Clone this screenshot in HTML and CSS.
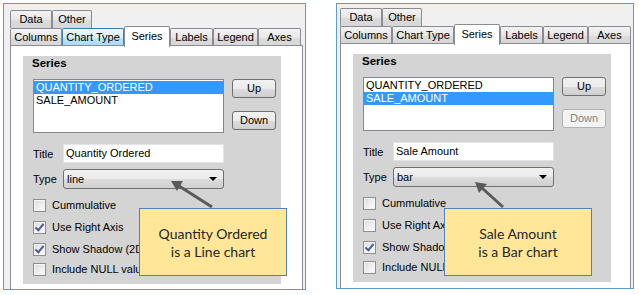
FILE: index.html
```html
<!DOCTYPE html>
<html>
<head>
<meta charset="utf-8">
<link rel="stylesheet" href="styles.css">
</head>
<body>
<div class="stage">
  <section class="panel panel-left">
    <div class="tabrow back">
      <span class="tab t-data">Data</span><span class="tab t-other">Other</span>
    </div>
    <div class="tabrow front">
      <span class="tab t-columns">Columns</span><span class="tab t-chart hover">Chart Type</span><span class="tab t-series active">Series</span><span class="tab t-labels">Labels</span><span class="tab t-legend">Legend</span><span class="tab t-axes">Axes</span>
    </div>
    <div class="pane">
      <div class="group">
        <div class="group-title">Series</div>
        <div class="list-row">
          <ul class="listbox">
            <li class="sel">QUANTITY_ORDERED</li>
            <li>SALE_AMOUNT</li>
          </ul>
          <div class="btns">
            <span class="btn btn-up">Up</span>
            <span class="btn btn-down">Down</span>
          </div>
        </div>
        <div class="field"><span class="flabel">Title</span><span class="input">Quantity Ordered</span></div>
        <div class="field field-type"><span class="flabel">Type</span><span class="combo">line<span class="caret"></span></span></div>
        <ul class="checks">
          <li><span class="cb"></span>Cummulative</li>
          <li><span class="cb on"></span>Use Right Axis</li>
          <li><span class="cb on"></span>Show Shadow (2D charts only)</li>
          <li><span class="cb"></span>Include NULL values (may produce gaps)</li>
        </ul>
      </div>
    </div>
  </section>

  <section class="panel panel-right">
    <div class="tabrow back">
      <span class="tab t-data">Data</span><span class="tab t-other">Other</span>
    </div>
    <div class="tabrow front">
      <span class="tab t-columns">Columns</span><span class="tab t-chart">Chart Type</span><span class="tab t-series active">Series</span><span class="tab t-labels">Labels</span><span class="tab t-legend">Legend</span><span class="tab t-axes">Axes</span>
    </div>
    <div class="pane">
      <div class="group">
        <div class="group-title">Series</div>
        <div class="list-row">
          <ul class="listbox">
            <li>QUANTITY_ORDERED</li>
            <li class="sel">SALE_AMOUNT</li>
          </ul>
          <div class="btns">
            <span class="btn btn-up">Up</span>
            <span class="btn btn-down disabled">Down</span>
          </div>
        </div>
        <div class="field"><span class="flabel">Title</span><span class="input">Sale Amount</span></div>
        <div class="field field-type"><span class="flabel">Type</span><span class="combo">bar<span class="caret"></span></span></div>
        <ul class="checks">
          <li><span class="cb"></span>Cummulative</li>
          <li><span class="cb"></span>Use Right Axis</li>
          <li><span class="cb on"></span>Show Shadow (2D charts only)</li>
          <li><span class="cb"></span>Include NULL values (may produce gaps)</li>
        </ul>
      </div>
    </div>
  </section>

  <svg class="arrows" width="639" height="295" viewBox="0 0 639 295">
    <g stroke="#5a5a5a" stroke-width="3" stroke-linecap="butt" fill="#5a5a5a">
      <line x1="212" y1="207" x2="179" y2="186"/>
      <polygon points="171,181 183,181 177,191" stroke="none"/>
      <line x1="503" y1="207" x2="482" y2="188"/>
      <polygon points="475,182 487,184 479,193" stroke="none"/>
    </g>
  </svg>
  <div class="callout callout-left">Quantity Ordered<br>is a Line chart</div>
  <div class="callout callout-right">Sale Amount<br>is a Bar chart</div>
</div>
</body>
</html>
```

FILE: styles.css
```css
* { box-sizing: border-box; }
html, body { margin: 0; padding: 0; background: #fff; }
body {
  font-family: "Liberation Sans", Arial, sans-serif;
  font-size: 11px;
  color: #000;
}
.stage {
  position: relative;
  width: 639px;
  height: 295px;
  display: flex;
  align-items: flex-start;
  gap: 30px;
  padding: 3px 0 0 3px;
}
.panel {
  position: relative;
  border: 1px solid #5b9bd5;
  background: #f0f0f0;
  overflow: hidden;
  display: flex;
  flex-direction: column;
}
.panel-left { width: 303px; height: 287px; padding: 6px 0 0 6px; }
.panel-right { width: 298px; height: 286px; padding: 4px 0 0 3px; }

.tabrow { display: flex; height: 18px; flex: none; }
.tab {
  flex: none;
  height: 18px;
  border: 1px solid #898c95;
  border-bottom: none;
  border-radius: 2px 2px 0 0;
  background: linear-gradient(#f4f4f4, #e6e6e6 50%, #dcdcdc 51%, #d6d6d6);
  text-align: center;
  line-height: 17px;
  color: #000;
  white-space: nowrap;
}
.t-data { width: 42px; }
.t-other { width: 40px; }
.t-columns { width: 52px; }
.t-chart { width: 62px; }
.t-series { width: 46px; }
.t-labels { width: 43px; }
.t-legend { width: 45px; }
.t-axes { width: 43px; }
.tab.hover {
  border-color: #3c7fb1;
  background: linear-gradient(#eaf6fd, #d9f0fc 50%, #bee6fd 51%, #a7d9f5);
}
.tab.active {
  position: relative;
  z-index: 2;
  height: 21px;
  margin-top: -2px;
  background: #fff;
  line-height: 19px;
}

.pane {
  flex: 1;
  width: 293px;
  background: #fff;
  border: 1px solid #898c95;
  border-bottom: none;
  margin-top: -1px;
  padding: 10px 0 0 12px;
}
.panel-right .pane { width: 291px; }

.group {
  width: 258px;
  height: 228px;
  background: #d4d4d4;
  padding: 0 0 0 10px;
}
.group-title {
  font-weight: bold;
  font-size: 11.5px;
  height: 12px;
  line-height: 12px;
  margin-left: -1px;
  padding-top: 1px;
}
.list-row { display: flex; gap: 8px; margin-top: 11px; }
.listbox {
  list-style: none;
  margin: 0;
  width: 191px;
  height: 54px;
  border: 1px solid #828790;
  background: #fff;
  padding: 1px 0 0 0;
}
.listbox li { height: 13px; line-height: 13px; padding-left: 2px; }
.listbox li.sel { background: #3399ff; color: #fff; }
.btns { display: flex; flex-direction: column; gap: 13px; }
.btn {
  width: 44px;
  height: 19px;
  border: 1px solid #707070;
  border-radius: 3px;
  background: linear-gradient(#f2f2f2, #ebebeb 50%, #dddddd 51%, #cfcfcf);
  text-align: center;
  line-height: 17px;
}
.btn.disabled {
  border-color: #adb2b5;
  background: #f4f4f4;
  color: #838383;
}

.field { display: flex; align-items: center; margin-top: 11px; height: 19px; }
.field-type { margin-top: 6px; height: 20px; }
.flabel { width: 30px; flex: none; }
.input {
  width: 161px;
  height: 19px;
  background: #fff;
  border: 1px solid #e2e3ea;
  line-height: 17px;
  padding-left: 2px;
}
.combo {
  position: relative;
  width: 161px;
  height: 20px;
  border: 1px solid #707070;
  border-radius: 3px;
  background: linear-gradient(#f2f2f2, #ebebeb 50%, #dddddd 51%, #cfcfcf);
  line-height: 18px;
  padding-left: 3px;
}
.caret {
  position: absolute;
  right: 6px;
  top: 7px;
  width: 0;
  height: 0;
  border-left: 4px solid transparent;
  border-right: 4px solid transparent;
  border-top: 4px solid #000;
}

.checks { list-style: none; margin: 10px 0 0 0; padding: 0; }
.checks li {
  display: flex;
  align-items: center;
  gap: 6px;
  height: 13px;
  line-height: 13px;
  margin-bottom: 9px;
  white-space: nowrap;
}
.checks li:nth-child(3) { margin-bottom: 7px; }
.cb {
  flex: none;
  position: relative;
  width: 13px;
  height: 13px;
  border: 1px solid #8e8f8f;
  background: linear-gradient(135deg, #dcdcdc, #fefefe);
  box-shadow: inset 0 0 0 1px #f4f4f4;
}
.cb.on::after {
  content: "";
  position: absolute;
  left: 3px;
  top: 0px;
  width: 3px;
  height: 7px;
  border-right: 2px solid #4a5f97;
  border-bottom: 2px solid #4a5f97;
  transform: rotate(40deg);
}

.arrows { position: absolute; left: 0; top: 0; z-index: 5; pointer-events: none; }
.callout {
  position: absolute;
  z-index: 6;
  width: 148px;
  height: 68px;
  top: 208px;
  background: #ffe699;
  border: 1px solid #4f81bd;
  font-family: Lato, "Open Sans", sans-serif;
  font-size: 14px;
  line-height: 18px;
  color: #262626;
  text-align: center;
  padding-top: 16px;
}
.callout-left { left: 139px; }
.callout-right { left: 444px; }
```
